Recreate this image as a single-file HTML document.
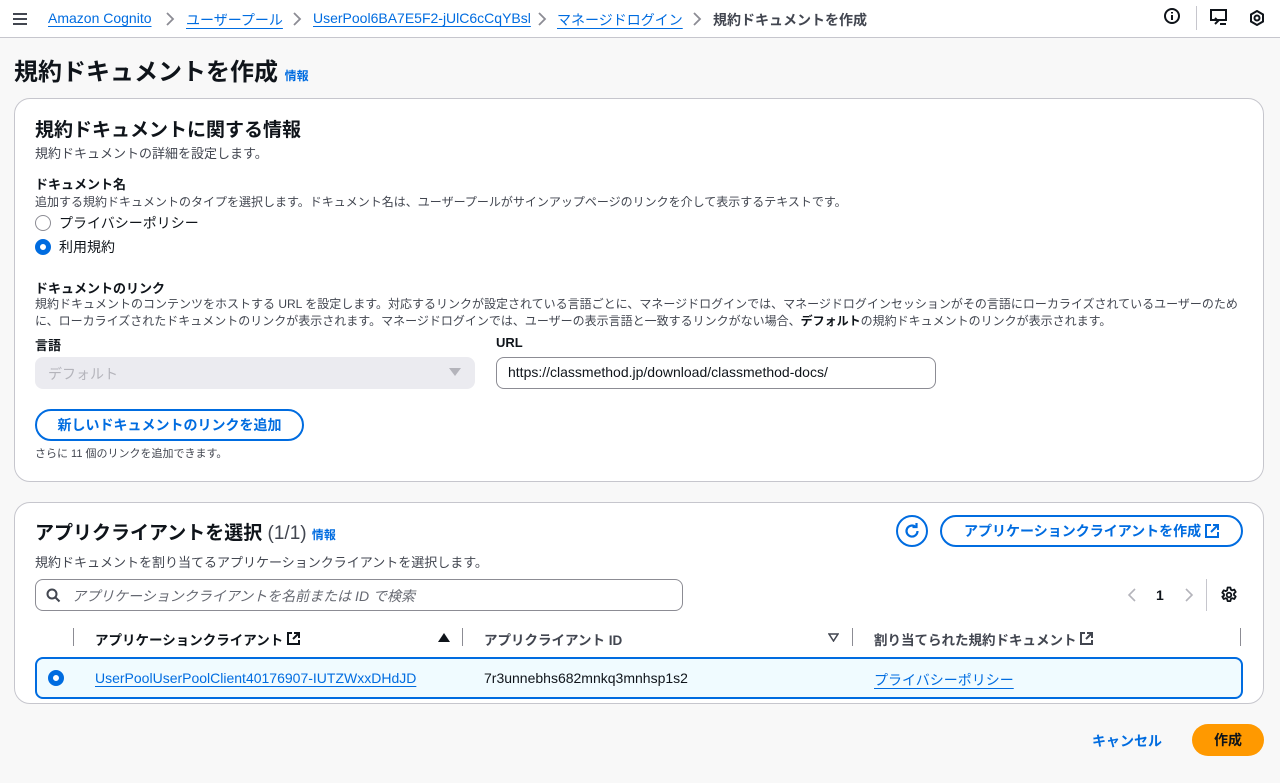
<!DOCTYPE html>
<html><head><meta charset="utf-8"><style>
*{box-sizing:border-box;margin:0;padding:0}
body{width:1280px;height:783px;background:#f8f8f8;font-family:"Liberation Sans","Noto Sans CJK JP",sans-serif;color:#0f141a;position:relative;overflow:hidden;font-size:14px}
.a{position:absolute;white-space:nowrap}
.lnk{color:#006ce0;text-decoration:underline;text-underline-offset:3px}
.card{position:absolute;background:#fff;border:1px solid #c6c6cd;border-radius:16px}
.sm{font-size:12px;color:#424650}
.b{font-weight:bold}
.radio{position:absolute;width:16px;height:16px;border-radius:50%}
.btn{position:absolute;border:2px solid #006ce0;border-radius:20px;color:#006ce0;font-weight:bold;font-size:14px;display:flex;align-items:center;justify-content:center;background:#fff}
.sep{position:absolute;width:1px;background:#8c8c94;height:18px}
.chev{position:absolute;top:12px}
</style></head><body>
<div class="a" style="left:0;top:0;width:1280px;height:38px;background:#fff;border-bottom:1px solid #c6c6cd"></div>
<svg class="a" style="left:12px;top:12px" width="16" height="14"><path d="M1 2h14M1 7h14M1 12h14" stroke="#424650" stroke-width="2"/></svg>
<div class="a lnk" style="left:48px;top:10px">Amazon Cognito</div>
<svg class="chev" style="left:165px" width="10" height="14"><path d="M2 1l6 6-6 6" fill="none" stroke="#8c8c94" stroke-width="1.8"/></svg>
<div class="a lnk" style="left:186px;top:10px">ユーザープール</div>
<svg class="chev" style="left:292px" width="10" height="14"><path d="M2 1l6 6-6 6" fill="none" stroke="#8c8c94" stroke-width="1.8"/></svg>
<div class="a lnk" style="left:313px;top:10px">UserPool6BA7E5F2-jUlC6cCqYBsl</div>
<svg class="chev" style="left:537px" width="10" height="14"><path d="M2 1l6 6-6 6" fill="none" stroke="#8c8c94" stroke-width="1.8"/></svg>
<div class="a lnk" style="left:557px;top:10px">マネージドログイン</div>
<svg class="chev" style="left:692px" width="10" height="14"><path d="M2 1l6 6-6 6" fill="none" stroke="#8c8c94" stroke-width="1.8"/></svg>
<div class="a b" style="left:713px;top:10px;color:#424650">規約ドキュメントを作成</div>
<svg class="a" style="left:1164px;top:8px" width="16" height="16"><circle cx="8" cy="8" r="7" fill="none" stroke="#0f141a" stroke-width="2"/><path d="M8 7v5M8 4v1.5" stroke="#0f141a" stroke-width="2"/></svg>
<div class="a" style="left:1196px;top:6px;width:1px;height:24px;background:#c6c6cd"></div>
<svg class="a" style="left:1210px;top:9px" width="18" height="17"><rect x="1" y="1" width="15" height="10" fill="none" stroke="#0f141a" stroke-width="2"/><path d="M5 9l3 3-3 3M10 15h6" stroke="#0f141a" stroke-width="2" fill="none"/></svg>
<svg class="a" style="left:1249px;top:10px" width="16" height="16"><path d="M8 1l6 3.5v7L8 15l-6-3.5v-7z" fill="none" stroke="#0f141a" stroke-width="2"/><circle cx="8" cy="8" r="2.5" fill="none" stroke="#0f141a" stroke-width="2"/></svg>

<div class="a b" style="left:14px;top:52px;font-size:24px">規約ドキュメントを作成 <span style="font-size:12px;color:#006ce0">情報</span></div>

<div class="card" style="left:14px;top:98px;width:1250px;height:384px"></div>
<div class="a b" style="left:35px;top:115px;font-size:19px">規約ドキュメントに関する情報</div>
<div class="a" style="left:35px;top:143px;font-size:13px;color:#424650">規約ドキュメントの詳細を設定します。</div>
<div class="a b" style="left:35px;top:174px;font-size:13px">ドキュメント名</div>
<div class="a sm" style="left:35px;top:193px">追加する規約ドキュメントのタイプを選択します。ドキュメント名は、ユーザープールがサインアップページのリンクを介して表示するテキストです。</div>
<div class="radio" style="left:35px;top:215px;border:1.5px solid #8c8c94"></div>
<div class="a" style="left:59px;top:213px">プライバシーポリシー</div>
<div class="radio" style="left:35px;top:239px;border:5px solid #006ce0"></div>
<div class="a" style="left:59px;top:237px">利用規約</div>
<div class="a b" style="left:35px;top:278px;font-size:13px">ドキュメントのリンク</div>
<div class="a sm" style="left:35px;top:296px;line-height:17px;white-space:normal;width:1210px">規約ドキュメントのコンテンツをホストする URL を設定します。対応するリンクが設定されている言語ごとに、マネージドログインでは、マネージドログインセッションがその言語にローカライズされているユーザーのために、ローカライズされたドキュメントのリンクが表示されます。マネージドログインでは、ユーザーの表示言語と一致するリンクがない場合、<b style="color:#0f141a">デフォルト</b>の規約ドキュメントのリンクが表示されます。</div>
<div class="a b" style="left:35px;top:335px;font-size:13px">言語</div>
<div class="a b" style="left:496px;top:335px;font-size:13px">URL</div>
<div class="a" style="left:35px;top:357px;width:440px;height:32px;background:#ebebf0;border-radius:8px"></div>
<div class="a" style="left:48px;top:364px;color:#b4b4bb">デフォルト</div>
<svg class="a" style="left:449px;top:368px" width="12" height="8"><path d="M0 0h12L6 8z" fill="#b4b4bb"/></svg>
<div class="a" style="left:496px;top:357px;width:440px;height:32px;border:1px solid #8c8c94;border-radius:8px;background:#fff"></div>
<div class="a" style="left:508px;top:364px">https://classmethod.jp/download/classmethod-docs/</div>
<div class="btn" style="left:35px;top:409px;width:269px;height:32px">新しいドキュメントのリンクを追加</div>
<div class="a sm" style="left:35px;top:445px;font-size:11px">さらに 11 個のリンクを追加できます。</div>

<div class="card" style="left:14px;top:502px;width:1250px;height:202px"></div>
<div class="a b" style="left:35px;top:518px;font-size:19px">アプリクライアントを選択 <span style="font-weight:normal;color:#424650">(1/1)</span> <span style="font-size:12px;color:#006ce0">情報</span></div>
<div class="a" style="left:35px;top:552px;font-size:13px;color:#424650">規約ドキュメントを割り当てるアプリケーションクライアントを選択します。</div>
<div class="btn" style="left:896px;top:515px;width:32px;height:32px;border-radius:50%"><svg width="18" height="18"><path d="M14.5 9A5.5 5.5 0 1 1 12.5 4.8" fill="none" stroke="#006ce0" stroke-width="2.2"/><path d="M9.5 5h4V1" fill="none" stroke="#006ce0" stroke-width="2.2"/></svg></div>
<div class="btn" style="left:940px;top:515px;width:303px;height:32px">アプリケーションクライアントを作成&nbsp;<svg width="14" height="14"><path d="M6 1H1v12h12V8M8 1h5v5M13 1L6 8" fill="none" stroke="#006ce0" stroke-width="2"/></svg></div>
<div class="a" style="left:35px;top:579px;width:648px;height:32px;border:1px solid #8c8c94;border-radius:8px;background:#fff"></div>
<svg class="a" style="left:46px;top:588px" width="15" height="15"><circle cx="6" cy="6" r="4.5" fill="none" stroke="#424650" stroke-width="2"/><path d="M9.5 9.5l4 4" stroke="#424650" stroke-width="2"/></svg>
<div class="a" style="left:72px;top:586px;color:#656871;font-style:italic">アプリケーションクライアントを名前または ID で検索</div>
<svg class="a" style="left:1127px;top:588px" width="10" height="14"><path d="M8 1L2 7l6 6" fill="none" stroke="#b4b4bb" stroke-width="1.6"/></svg>
<div class="a b" style="left:1156px;top:587px">1</div>
<svg class="a" style="left:1184px;top:588px" width="10" height="14"><path d="M2 1l6 6-6 6" fill="none" stroke="#b4b4bb" stroke-width="1.6"/></svg>
<div class="a" style="left:1206px;top:579px;width:1px;height:32px;background:#c6c6cd"></div>
<svg class="a" style="left:1220px;top:586px" width="18" height="18" viewBox="0 0 18 18"><path d="M7.6 1.5h2.8l.5 2.2 1.3.7 2.1-.8 1.4 2.4-1.7 1.5v1.6l1.7 1.5-1.4 2.4-2.1-.8-1.3.7-.5 2.2H7.6l-.5-2.2-1.3-.7-2.1.8-1.4-2.4L4 9.8V8.2L2.3 6.7l1.4-2.4 2.1.8 1.3-.7z" fill="none" stroke="#0f141a" stroke-width="1.8" stroke-linejoin="round"/><circle cx="9" cy="9" r="2.3" fill="none" stroke="#0f141a" stroke-width="1.8"/></svg>
<div class="sep" style="left:73px;top:628px"></div>
<div class="a b" style="left:95px;top:629px;font-size:13.5px">アプリケーションクライアント <svg width="13" height="13"><path d="M5 1H1v11h11V8M7 1h5v5M12 1L6 7" fill="none" stroke="#0f141a" stroke-width="2"/></svg></div>
<svg class="a" style="left:438px;top:633px" width="12" height="9"><path d="M0 9h12L6 0z" fill="#0f141a"/></svg>
<div class="sep" style="left:462px;top:628px"></div>
<div class="a b" style="left:484px;top:629px;font-size:13.5px;color:#424650">アプリクライアント ID</div>
<svg class="a" style="left:828px;top:633px" width="11" height="9"><path d="M1 1h9L5.5 8z" fill="none" stroke="#424650" stroke-width="1.5"/></svg>
<div class="sep" style="left:852px;top:628px"></div>
<div class="a b" style="left:874px;top:629px;font-size:13.5px;color:#424650">割り当てられた規約ドキュメント <svg width="13" height="13"><path d="M5 1H1v11h11V8M7 1h5v5M12 1L6 7" fill="none" stroke="#424650" stroke-width="2"/></svg></div>
<div class="sep" style="left:1240px;top:628px"></div>
<div class="a" style="left:35px;top:657px;width:1208px;height:42px;background:#f0fbff;border:2px solid #006ce0;border-radius:8px"></div>
<div class="radio" style="left:48px;top:670px;border:5px solid #006ce0;background:#fff"></div>
<div class="a lnk" style="left:95px;top:670px">UserPoolUserPoolClient40176907-IUTZWxxDHdJD</div>
<div class="a" style="left:484px;top:670px">7r3unnebhs682mnkq3mnhsp1s2</div>
<div class="a lnk" style="left:874px;top:670px">プライバシーポリシー</div>

<div class="a b" style="left:1092px;top:731px;color:#006ce0">キャンセル</div>
<div class="a b" style="left:1192px;top:724px;width:72px;height:32px;background:#ff9900;border-radius:16px;display:flex;align-items:center;justify-content:center">作成</div>
</body></html>
